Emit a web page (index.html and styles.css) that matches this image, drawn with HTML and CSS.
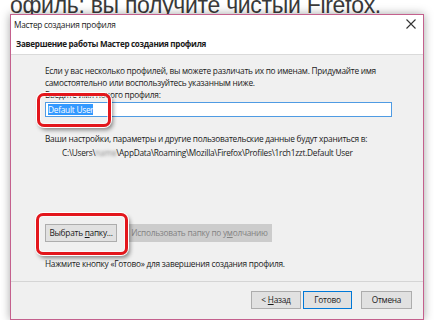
FILE: index.html
```html
<!DOCTYPE html>
<html lang="ru">
<head>
    <meta charset="UTF-8">
    <title>Мастер создания профиля</title>
    <link rel="stylesheet" href="styles.css">
</head>
<body>
    <div class="bgtext">офиль: вы получите чистый Firefox.</div>
    <div class="window">
        <div class="titlebar">
            <span>Мастер создания профиля</span>
            <svg class="close" width="10" height="10" viewBox="0 0 10 10">
                <path d="M0.5 0.5 L9.5 9.5 M9.5 0.5 L0.5 9.5" stroke="#333" stroke-width="1.1" fill="none"/>
            </svg>
        </div>
        <div class="header">Завершение работы Мастер создания профиля</div>
        <div class="body">
            <p class="intro">Если у вас несколько профилей, вы можете различать их по именам. Придумайте имя самостоятельно или воспользуйтесь указанным ниже.</p>
            <div class="label">Введите имя нового профиля:</div>
            <div class="input"><span class="sel">Default User</span></div>
            <div class="info">Ваши настройки, параметры и другие пользовательские данные будут храниться в:</div>
            <div class="path">C:\Users\<span class="blur">name</span>\AppData\Roaming\Mozilla\Firefox\Profiles\1rch1zzt.Default User</div>
            <div class="folder-row">
                <div class="btn folder">Выбрать <u>п</u>апку...</div>
                <div class="btn disabled">Использовать папку по у<u>м</u>олчанию</div>
            </div>
            <div class="hint">Нажмите кнопку «Готово» для завершения создания профиля.</div>
        </div>
        <div class="footer">
            <div class="btn back">&lt; <u>Н</u>азад</div>
            <div class="btn done">Готово</div>
            <div class="btn cancel">Отмена</div>
        </div>
        <div class="mark mark-name"></div>
        <div class="mark mark-folder"></div>
    </div>
</body>
</html>
```

FILE: styles.css
```css
body{
    margin: 0;
    background: #fff;
    font-family: "Open Sans", "Liberation Sans", sans-serif;
    font-size: 8.3px;
    letter-spacing: -0.25px;
    color: #1a1a1a;
    overflow: hidden;
}
.bgtext{
    height: 14px;
    line-height: 10px;
    padding-left: 10px;
    font-family: "Liberation Sans", sans-serif;
    font-size: 23px;
    letter-spacing: -0.3px;
    color: #3a3a3a;
    white-space: nowrap;
}
.window{
    position: relative;
    margin-left: 10px;
    width: 412px;
    height: 304px;
    border: 1px solid #c4608d;
    background: #f0f0f0;
    box-shadow: 0 0 9px rgba(0,0,0,0.35);
}
.titlebar{
    height: 18px;
    background: #fff;
    display: flex;
    align-items: center;
    justify-content: space-between;
    padding: 0 7px 0 3px;
}
.close{
    display: block;
}
.header{
    height: 21px;
    line-height: 21px;
    background: #fff;
    padding-left: 5px;
    font-weight: bold;
    font-size: 8.1px;
    letter-spacing: -0.3px;
    border-bottom: 1px solid #dadada;
}
.body{
    height: 227px;
    padding: 10px 0 0 34px;
    box-sizing: border-box;
    border-bottom: 1px solid #d5d5d5;
    line-height: 12px;
}
.intro{
    margin: 0;
    width: 350px;
}
.input{
    margin-top: 1px;
    width: 343px;
    height: 13px;
    border: 1px solid #4f9be3;
    background: #fff;
    padding-left: 2px;
    line-height: 13px;
}
.sel{
    background: #3399ff;
    color: #fff;
    display: inline-block;
    height: 11px;
    line-height: 11px;
    margin-top: 1px;
    vertical-align: top;
}
.info{
    margin-top: 16px;
}
.path{
    margin-top: 2px;
    padding-left: 17px;
}
.blur{
    color: transparent;
    text-shadow: 0 0 3px #888;
}
.folder-row{
    margin-top: 65px;
    display: flex;
    gap: 10px;
}
.btn{
    height: 16px;
    line-height: 16px;
    border: 1px solid #adadad;
    background: #e1e1e1;
    text-align: center;
    white-space: nowrap;
}
.btn u{
    text-underline-offset: 1px;
}
.folder{
    width: 70px;
}
.disabled{
    width: 143px;
    background: #cccccc;
    border-color: #cccccc;
    color: #838383;
}
.hint{
    margin-top: 16px;
}
.footer{
    height: 35px;
    display: flex;
    align-items: center;
    justify-content: flex-end;
    padding-right: 11px;
}
.back{
    width: 48px;
}
.done{
    width: 47px;
    margin-left: 2px;
    border-color: #0078d7;
}
.cancel{
    width: 49px;
    margin-left: 9px;
}
.mark{
    position: absolute;
    border: 3px solid #e3161c;
    border-radius: 7px;
    box-sizing: border-box;
    box-shadow: 0 0 0 1px #fff, 2px 3px 4px rgba(0,0,0,0.45), inset 0 0 0 1px rgba(255,255,255,0.6);
}
.mark-name{
    left: 26px;
    top: 78px;
    width: 74px;
    height: 34px;
}
.mark-folder{
    left: 25px;
    top: 198px;
    width: 92px;
    height: 42px;
}
```
